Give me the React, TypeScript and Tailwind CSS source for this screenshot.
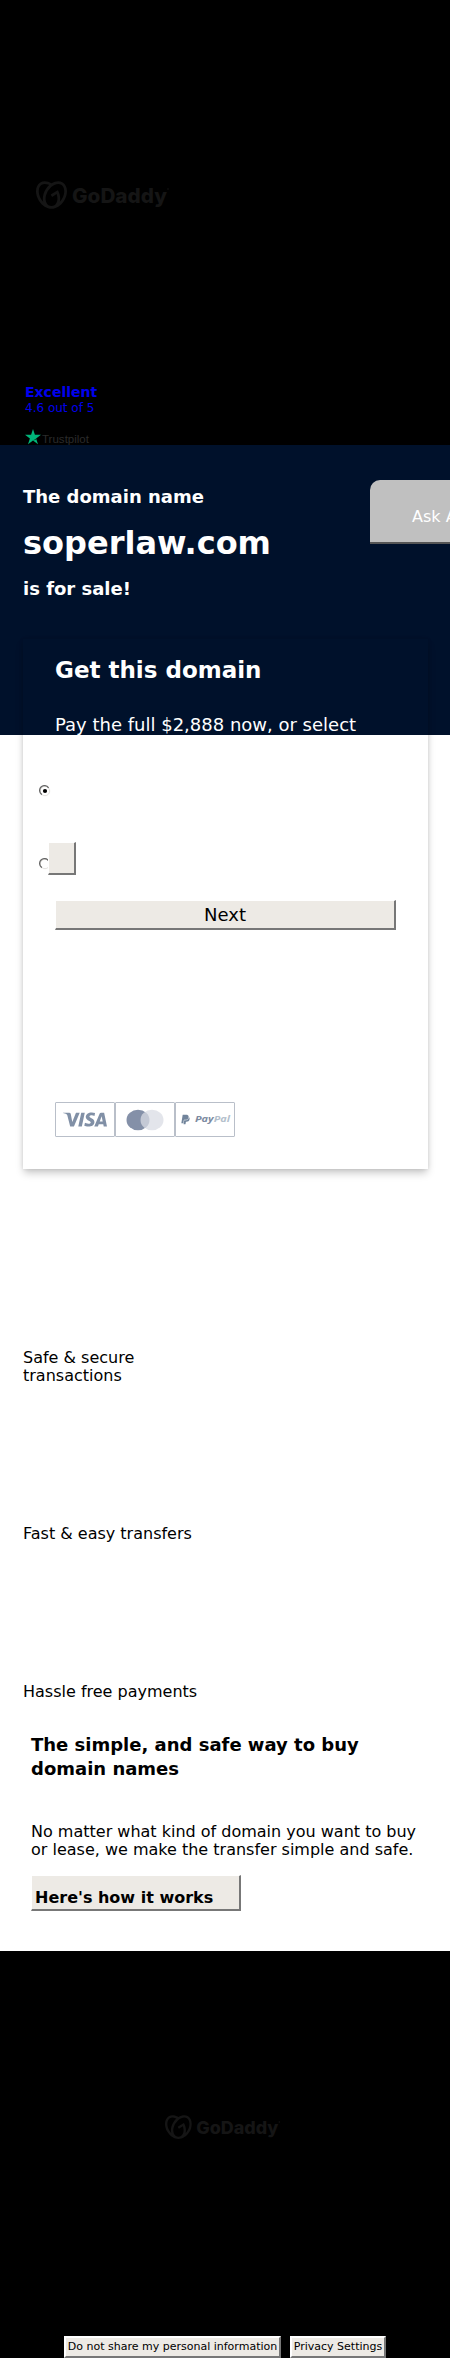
import React from "react";
import { SiGodaddy, SiVisa } from "react-icons/si";
import { FaPaypal } from "react-icons/fa";

interface ILogo {
  width: number;
  height: number;
}

const features = [
  { title: "Safe & secure transactions", className: "h-[176px]" },
  { title: "Fast & easy transfers", className: "h-[158px]" },
  { title: "Hassle free payments", className: "h-[36px]" },
];

function Logo({ width, height }: ILogo) {
  return (
    <svg width={width} height={height} viewBox="0 0 134 30" className="block overflow-visible text-[#151515]">
      <SiGodaddy x="0" y="-1.5" size={31} />
      <text
        x="36"
        y="21.5"
        textLength="95"
        lengthAdjust="spacingAndGlyphs"
        fontSize="20"
        fontWeight="800"
        fill="currentColor"
        className="font-['Inter',sans-serif]"
      >
        GoDaddy
      </text>
      <circle cx="132" cy="8" r="0.8" fill="currentColor" />
    </svg>
  );
}

function Trustpilot() {
  return (
    <svg width="66" height="18" viewBox="0 0 66 18" className="block overflow-visible">
      <path d="M8 0l1.9 5.8H16l-4.9 3.6L13 15.2 8 11.6l-5 3.6 1.9-5.8L0 5.8h6.1z" fill="#00b67a" />
      <path d="M11.5 10.7l-.4-1.3L8 11.6z" fill="#005128" />
      <text
        x="17"
        y="13.5"
        textLength="47"
        lengthAdjust="spacingAndGlyphs"
        fontSize="11.5"
        fill="#2b2b2b"
        className="font-['Liberation_Sans',sans-serif]"
      >
        Trustpilot
      </text>
    </svg>
  );
}

function Radio({ checked }: { checked?: boolean }) {
  return (
    <svg width="12" height="12" viewBox="0 0 12 12" className="block">
      <circle cx="6" cy="6" r="4.7" fill="#fff" stroke="#e3e1dd" />
      <path d="M2.8 9.6A4.9 4.9 0 1 1 9.6 2.8" fill="none" stroke="#666" strokeWidth="1.3" />
      {checked && <circle cx="6" cy="6" r="2.1" fill="#000" />}
    </svg>
  );
}

export default function App() {
  return (
    <div className="w-[450px] h-[2358px] overflow-hidden bg-white text-black font-['DejaVu_Sans',sans-serif]">
      <header className="h-[445px] bg-black pt-[181px]">
        <div className="pl-[36px]">
          <Logo width={134} height={30} />
        </div>
        <div className="pl-[25px] mt-[173px]">
          <p className="text-[14px] leading-[17px] font-bold text-[#0000ee]">Excellent</p>
          <p className="text-[12px] leading-[14px] text-[#0000ee]">4.6 out of 5</p>
          <div className="mt-[14px]">
            <Trustpilot />
          </div>
        </div>
      </header>

      {/* the card hangs out of the navy hero */}
      <section className="h-[290px] bg-[#00112b] text-white">
        <div className="flex h-[194px] justify-between">
          <div className="pl-[23px] pt-[40px]">
            <h2 className="text-[18px] leading-[24px] font-bold">The domain name</h2>
            <h1 className="text-[32px] leading-[40px] font-bold mt-[14px]">soperlaw.com</h1>
            <h2 className="text-[18px] leading-[24px] font-bold mt-[14px]">is for sale!</h2>
          </div>
          <button className="mt-[35px] w-[80px] h-[64px] shrink-0 overflow-hidden whitespace-nowrap rounded-tl-[10px] border-b-2 border-[#555] bg-[#c0c0c0] pl-[42px] pt-[11px] text-left text-[16px]">
            Ask A
          </button>
        </div>

        <div className="ml-[23px] w-[405px] h-[530px] pt-[16px] shadow-[0_5px_8px_-1px_rgba(0,0,0,0.22),0_0_4px_rgba(0,0,0,0.1)]">
          <h3 className="pl-[32px] text-[23px] leading-[30px] font-bold">Get this domain</h3>
          <p className="pl-[32px] mt-[28px] h-[24px] text-[18px] leading-[24px]">
            Pay the full $2,888 now, or select
          </p>
          <div className="pl-[16px] mt-[48px]">
            <Radio checked />
          </div>
          <div className="flex pl-[16px] mt-[45px] h-[34px]">
            <div className="w-[9px] shrink-0 overflow-hidden pt-[16px]">
              <Radio />
            </div>
            <button className="h-[33px] w-[28px] border-t border-l border-r-2 border-b-2 border-t-white border-l-white border-r-[#777] border-b-[#777] bg-[#edeae5]"></button>
          </div>
          <button className="ml-[32px] mt-[24px] block h-[30px] w-[341px] border-t border-l border-r-2 border-b-2 border-t-white border-l-white border-r-[#777] border-b-[#777] bg-[#edeae5] text-[18px] leading-[26px] text-black">
            Next
          </button>
          <div className="ml-[32px] mt-[172px] flex w-[180px] h-[35px]">
            <div className="flex w-[60px] items-center justify-center rounded-[1px] border border-[#b9bfc9]">
              <svg width="44" height="15" viewBox="0 8.1 24 7.8" className="text-[#8190a6]">
                <SiVisa size={24} />
              </svg>
            </div>
            <div className="flex w-[60px] items-center justify-center rounded-[1px] border border-[#b9bfc9]">
              <svg width="38" height="22" viewBox="0 0 38 22">
                <ellipse cx="12" cy="11" rx="11.5" ry="10.3" fill="#8490a8" />
                <ellipse cx="26" cy="11" rx="11.5" ry="10.3" fill="#d9dce4" fillOpacity="0.75" />
              </svg>
            </div>
            <div className="flex w-[60px] items-center justify-center rounded-[1px] border border-[#b9bfc9]">
              <FaPaypal className="text-[#71849b] text-[11px]" />
              <svg width="37" height="13" viewBox="0 0 37 13" className="ml-[3px] overflow-visible">
                <text
                  x="1"
                  y="9.3"
                  textLength="35"
                  lengthAdjust="spacingAndGlyphs"
                  fontSize="9.5"
                  fontWeight="700"
                  fontStyle="italic"
                  fill="#7c8ba1"
                  className="font-['Open_Sans',sans-serif]"
                >
                  Pay<tspan fill="#b4bfcc">Pal</tspan>
                </text>
              </svg>
            </div>
          </div>
        </div>
      </section>

      <section className="h-[1216px] pt-[614px]">
        {features.map((el, index) => (
          <div key={index} className={el.className}>
            <p className="ml-[23px] w-[140px] text-[16px] leading-[18px] whitespace-nowrap">
              {index === 0 ? <>Safe & secure<br />transactions</> : el.title}
            </p>
          </div>
        ))}
        <div className="pl-[31px] pt-[14px]">
          <h2 className="text-[18px] leading-[24px] font-bold">
            The simple, and safe way to buy <br /> domain names
          </h2>
          <p className="mt-[42px] text-[16px] leading-[18px] whitespace-nowrap">
            No matter what kind of domain you want to buy <br /> or lease, we make the transfer simple and safe.
          </p>
          <button className="mt-[16px] block h-[36px] w-[210px] border-t border-l border-r-2 border-b-2 border-t-white border-l-white border-r-[#777] border-b-[#777] bg-[#edeae5] pl-[3px] pt-[10px] text-left text-[16px] leading-[23px] font-bold">
            Here's how it works
          </button>
        </div>
      </section>

      <footer className="h-[407px] bg-black pt-[164px]">
        <div className="pl-[165px]">
          <Logo width={116} height={26} />
        </div>
        <div className="mt-[195px] flex gap-[9px] pl-[64px]">
          <button className="h-[22px] w-[217px] whitespace-nowrap border-2 border-t-white border-l-white border-r-[#777] border-b-[#777] bg-[#edeae5] text-[11px] leading-[18px]">
            Do not share my personal information
          </button>
          <button className="h-[22px] w-[96px] whitespace-nowrap border-2 border-t-white border-l-white border-r-[#777] border-b-[#777] bg-[#edeae5] text-[11px] leading-[18px]">
            Privacy Settings
          </button>
        </div>
      </footer>
    </div>
  );
}
